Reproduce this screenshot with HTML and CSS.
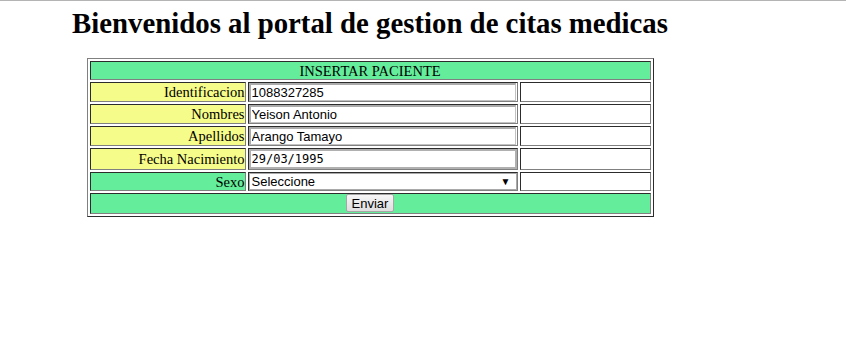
FILE: index.html
```html
<!DOCTYPE html>
<html lang="es">
<head>
    <meta charset="UTF-8">
    <meta name="viewport" content="width=device-width, initial-scale=1.0">
    <title>Citas Medicas</title>
    <link rel="stylesheet" href="styles.css">
</head>
<body>
    <div class="container">
        <h1>Bienvenidos al portal de gestion de citas medicas</h1>

        <form id="pacienteForm">
            <table class="form-table">
                <tr>
                    <td colspan="3" class="header">INSERTAR PACIENTE</td>
                </tr>
                <tr>
                    <td class="label">Identificacion</td>
                    <td class="field"><input type="text" name="identificacion" value="1088327285"></td>
                    <td class="extra"></td>
                </tr>
                <tr>
                    <td class="label">Nombres</td>
                    <td class="field"><input type="text" name="nombres" value="Yeison Antonio"></td>
                    <td class="extra"></td>
                </tr>
                <tr>
                    <td class="label">Apellidos</td>
                    <td class="field"><input type="text" name="apellidos" value="Arango Tamayo"></td>
                    <td class="extra"></td>
                </tr>
                <tr>
                    <td class="label">Fecha Nacimiento</td>
                    <td class="field"><input type="text" class="date-input" name="fecha" value="29/03/1995"></td>
                    <td class="extra"></td>
                </tr>
                <tr class="short-row">
                    <td class="label label-green">Sexo</td>
                    <td class="field">
                        <span class="select-wrap">
                            <select name="sexo">
                                <option>Seleccione</option>
                                <option>Masculino</option>
                                <option>Femenino</option>
                            </select>
                            <span class="select-arrow">&#9660;</span>
                        </span>
                    </td>
                    <td class="extra"></td>
                </tr>
                <tr>
                    <td colspan="3" class="footer"><button type="submit">Enviar</button></td>
                </tr>
            </table>
        </form>
    </div>
</body>
</html>
```

FILE: styles.css
```css
html {
    border-top: 1px solid #b4b4b4;
}

body {
    margin: 8px;
    font-family: "Liberation Serif", "Times New Roman", serif;
    background-color: #fff;
}

.container {
    width: 724px;
    text-align: center;
}

h1 {
    font-size: 28.8px;
    font-weight: bold;
    margin: 0;
    line-height: 29px;
}

form {
    margin-top: 20px;
}

.form-table {
    margin: 0 auto;
    border: 1px outset #808080;
    border-spacing: 2px;
    font-size: 14.5px;
}

.form-table td {
    border: 1px inset #808080;
    padding: 0;
    height: 18px;
    line-height: 16px;
}

.form-table .header {
    background-color: #64ee9c;
    text-align: center;
    height: 17px;
}

.short-row td {
    height: 17px;
}

.label {
    background-color: #f6fc8a;
    text-align: right;
    width: 154px;
}

.label-green {
    background-color: #64ee9c;
}

.field {
    width: 268px;
    text-align: left;
}

.extra {
    width: 129px;
}

.footer {
    background-color: #64ee9c;
    text-align: center;
}

input {
    display: block;
    box-sizing: border-box;
    width: 267px;
    height: 18px;
    margin: 0;
    padding: 0 1px;
    border: 1px solid #c2c2c2;
    border-top: 2px solid #ababab;
    border-left: 2px solid #ababab;
    font-family: "Liberation Sans", Arial, sans-serif;
    font-size: 13px;
}

.date-input {
    font-family: "DejaVu Sans Mono", monospace;
    font-size: 12px;
    width: 268px;
    height: 20px;
    border: 2px solid #b0b0b0;
}

.select-wrap {
    position: relative;
    display: block;
}

select {
    display: block;
    -webkit-appearance: none;
    appearance: none;
    box-sizing: border-box;
    width: 268px;
    height: 17px;
    margin: 0;
    padding: 0 2px;
    border: 1px solid #a9a9a9;
    border-radius: 0;
    background-color: #fff;
    font-family: "Liberation Sans", Arial, sans-serif;
    font-size: 13px;
    color: #000;
}

.select-arrow {
    position: absolute;
    right: 6px;
    top: 3px;
    font-size: 10px;
    line-height: 11px;
    pointer-events: none;
}

button {
    font-family: "Liberation Sans", Arial, sans-serif;
    font-size: 13px;
    line-height: 15px;
    padding: 0 5px;
    height: 18px;
    margin: 0 0 1px;
    background: linear-gradient(#f6f6f6, #dedede);
    border: 1px solid #a6a6a6;
    border-radius: 2px;
    color: #000;
    vertical-align: middle;
}
```
